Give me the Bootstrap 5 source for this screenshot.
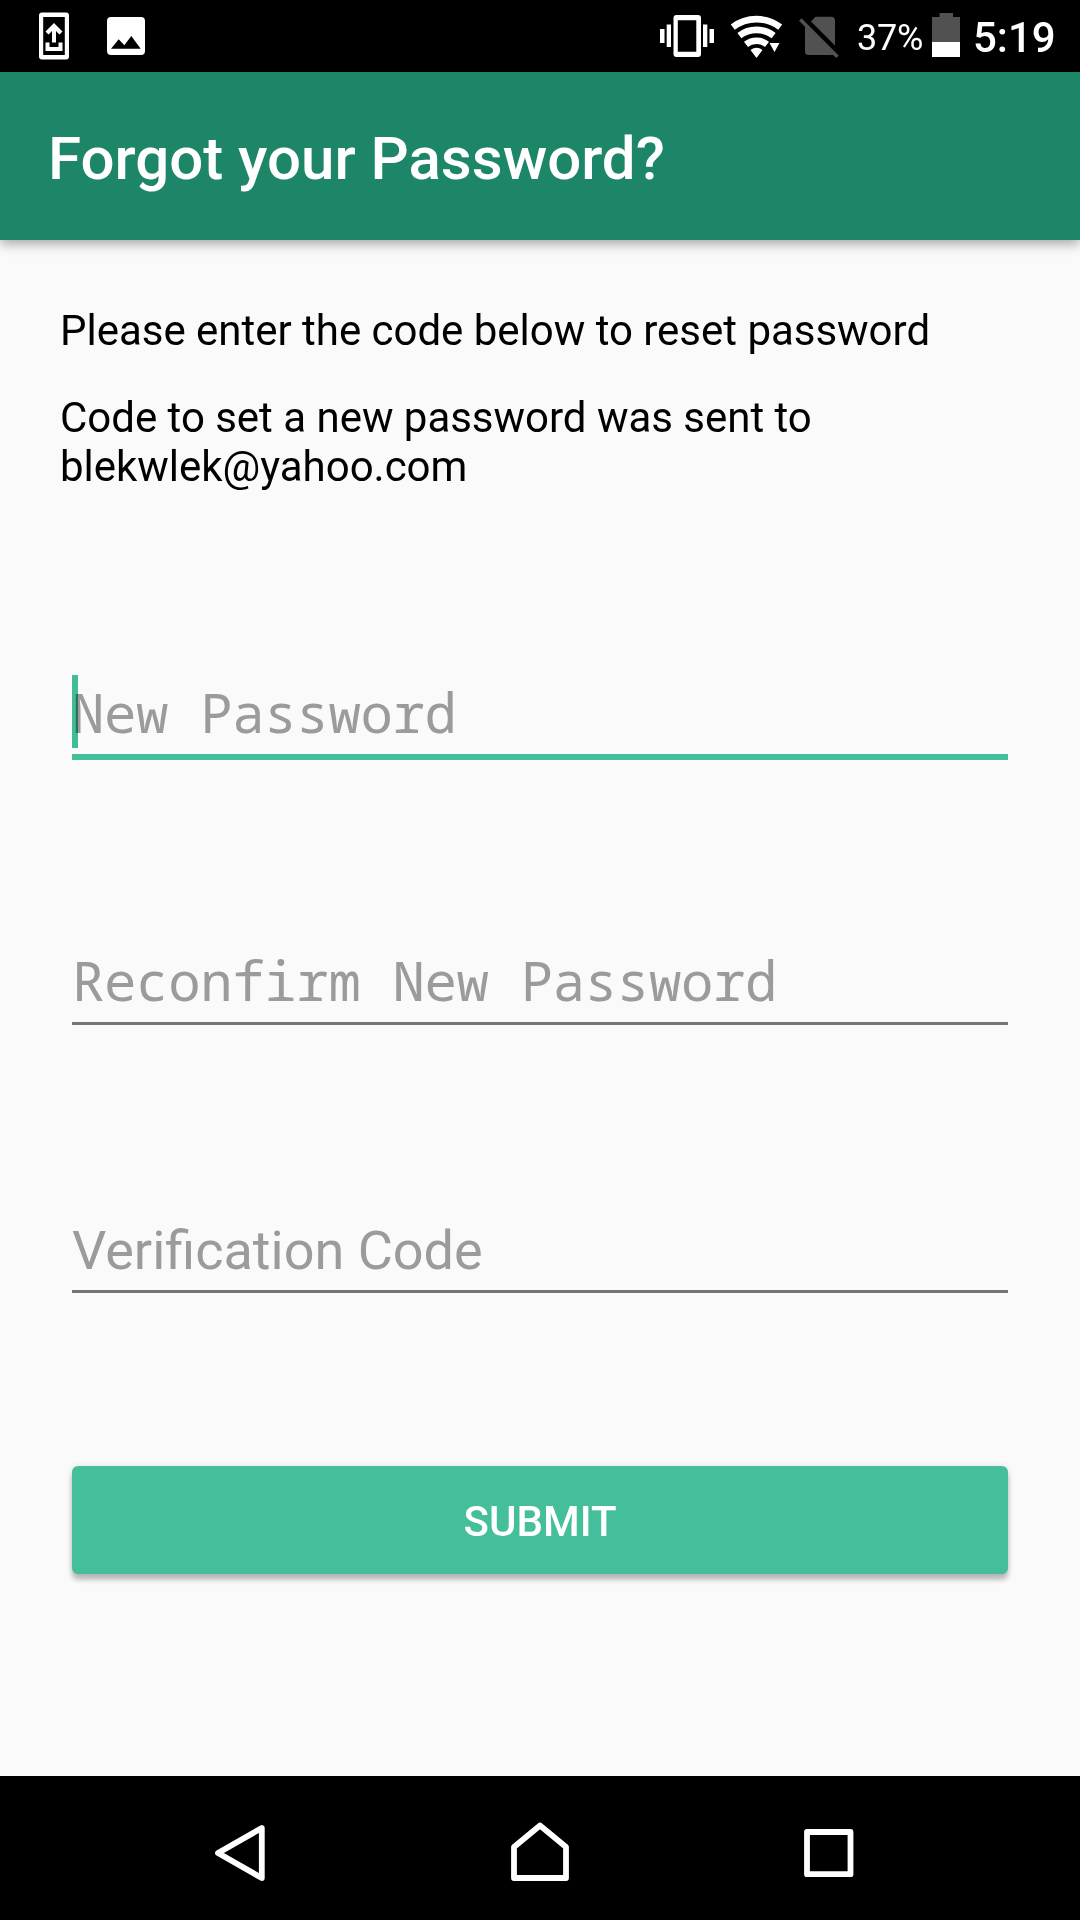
<!DOCTYPE html>
<html lang="en">
<head>
<meta charset="utf-8">
<meta name="viewport" content="width=device-width, initial-scale=1">
<title>Forgot your Password?</title>
<link rel="stylesheet" href="https://cdn.jsdelivr.net/npm/bootstrap@5.3.0/dist/css/bootstrap.min.css">
<style>
body { font-family: Roboto, sans-serif; background: #fafafa; color: #000; }
svg { display: block; flex: none; }
.screen { height: 1920px; width: 1080px; }
.status-bar { height: 72px; padding-left: 39px; padding-right: 26px; }
.icon-picture { margin-left: 38px; }
.icon-signal { margin-left: 16px; }
.battery-text { font-size: 36px; line-height: 72px; padding-top: 3px; margin-left: 17px; width: 75px; letter-spacing: -.2px; }
.clock { font-size: 42px; line-height: 72px; font-weight: 500; margin-left: 13px; padding-top: 3px; width: 81px; }
.app-bar { height: 168px; background: #1e8668; box-shadow: 0 3px 12px rgba(0,0,0,.38); padding: 0 48px; z-index: 1; }
.app-title { font-size: 60px; line-height: 70px; font-weight: 500; padding-top: 5px; }
.content-area { padding: 66px 60px 0; }
.info { font-size: 42px; line-height: 49px; letter-spacing: -.02px; }
.info + .info { margin-top: 38px; }
.entry-form { padding: 0 12px; margin-top: 180px; }
.field { height: 92px; }
.field .form-control { height: 86px; padding: 4px 0 0; background: transparent; border: 0; border-bottom: 3px solid #757575; border-radius: 0; font-size: 54px; line-height: 63px; letter-spacing: -.03px; font-variant-ligatures: common-ligatures; box-shadow: none; color: #000; }
.field .form-control::placeholder { color: #9b9b9b; opacity: 1; }
.field .form-control.mono { font-family: "Noto Sans Mono", "DejaVu Sans Mono", monospace; letter-spacing: -.35px; padding: 0 0 2px; }
.field .form-control.plain { letter-spacing: normal; }
.field.active .form-control { height: 89px; border-bottom: 6px solid #44be9b; }
.cursor { width: 6px; height: 73px; top: 4px; left: 0; background: #44be9b; mix-blend-mode: multiply; }
.gap-field { margin-top: 176px; }
.submit { height: 108px; margin-top: 167px; padding: 2px 0 0; background: #44be9b; color: #fff; border: 0; border-radius: 6px; font-size: 42px; font-weight: 500; line-height: 49px; box-shadow: 0 6px 5px rgba(0,0,0,.24), 0 0 6px rgba(0,0,0,.1); }
.nav-bar { height: 144px; padding: 10px 226px 0 214px; }
.icon-home { margin-left: 9px; }
</style>
<script src="https://cdn.jsdelivr.net/npm/bootstrap@5.3.0/dist/js/bootstrap.bundle.min.js"></script>
</head>
<body>
<div class="screen d-flex flex-column overflow-hidden">
  <div class="status-bar bg-black text-white d-flex align-items-center flex-shrink-0">
    <!-- system update -->
    <svg width="30" height="72" viewBox="39 0 30 72"><path fill="#fff" fill-rule="evenodd" d="M42 12.500h24q3 0 3 3v41q0 3-3 3H42q-3 0-3-3v-41q0-3 3-3zM43.200 17v38h21.600V17z"/><path fill="#fff" d="M54 23l8.500 8.500-3 3L56 31v11.500h-4V31l-3.500 3.500-3-3zM45.500 42.500h4V47h9v-4.500h4V51h-17z"/></svg>
    <!-- picture -->
    <svg class="icon-picture" width="38" height="72" viewBox="107 0 38 72"><path fill="#fff" fill-rule="evenodd" d="M111 17h30q4 0 4 4v30q0 4-4 4h-30q-4 0-4-4V21q0-4 4-4zM111 48.700h29.700L131.300 36l-7 9.200-5.600-6z"/></svg>
    <!-- vibrate -->
    <svg class="ms-auto" width="54" height="72" viewBox="660 0 54 72"><g fill="#fff"><path d="M660 29h4.500v14H660zM666.700 24.500h4.300V47h-4.300zM703 24.500h4.300V47H703zM709.500 29h4.500v14h-4.500z"/><path fill-rule="evenodd" d="M676.500 15h21.500q3 0 3 3v36q0 3-3 3h-21.500q-3 0-3-3V18q0-3 3-3zM677.800 20.300v31.500h18.500V20.300z"/></g></svg>
    <!-- wifi -->
    <svg class="icon-signal" width="53" height="72" viewBox="730 0 53 72"><g fill="none" stroke="#fff" stroke-width="6.600"><path d="M732.800 27.200a39 39 0 0 1 47.400 0M739.400 35.600a28.300 28.300 0 0 1 34.200 0M746 44.300a17.300 17.300 0 0 1 21 0"/></g><path fill="#fff" d="M756.500 58l-6-8a10 10 0 0 1 12 0zM769.500 43h10l-5 9z"/></svg>
    <!-- no SIM -->
    <svg class="icon-signal" width="41" height="72" viewBox="799 0 41 72"><g fill="#515151"><path d="M811 21.500l4.500-4.700h15.500q4 0 4 4v24.700zM805 25.500v26q0 3.500 3.500 3.500h23.500q1.500 0 2.200-.8z"/><path d="M801.500 18.300l37.200 37.200-2.500 2.500L799 20.800z"/></g></svg>
    <span class="battery-text">37%</span>
    <svg width="28" height="72" viewBox="932 0 28 72"><path fill="#515151" d="M939.500 13h13.500v4h7v25h-28V17h7.500z"/><path fill="#fff" d="M932 42h28v15h-28z"/></svg>
    <span class="clock">5:19</span>
  </div>
  <header class="app-bar position-relative d-flex align-items-center flex-shrink-0">
    <h1 class="app-title text-white mb-0">Forgot your Password?</h1>
  </header>
  <main class="content-area flex-grow-1">
    <p class="info mb-0">Please enter the code below to reset password</p>
    <p class="info mb-0">Code to set a new password was sent to<br>blekwlek@yahoo.com</p>
    <form class="entry-form">
      <div class="field active position-relative"><input class="form-control mono" type="text" placeholder="New Password"><span class="cursor position-absolute"></span></div>
      <div class="field gap-field"><input class="form-control mono" type="text" placeholder="Reconfirm New Password"></div>
      <div class="field gap-field"><input class="form-control plain" type="text" placeholder="Verification Code"></div>
      <button class="submit btn w-100" type="button">SUBMIT</button>
    </form>
  </main>
  <nav class="nav-bar bg-black d-flex align-items-center justify-content-between flex-shrink-0">
    <svg width="52" height="60" viewBox="214 1823 52 60" fill="none" stroke="#fff" stroke-width="5.800" stroke-linejoin="round"><path d="M261.800 1828v50L218 1853z"/></svg>
    <svg class="icon-home" width="60" height="62" viewBox="510 1822 60 62" fill="none" stroke="#fff" stroke-width="5.800" stroke-linejoin="round"><path d="M514 1878v-31l26-21.500 26 21.500v31z"/></svg>
    <svg width="50" height="50" viewBox="804 1828 50 50" fill="none" stroke="#fff" stroke-width="5.800" stroke-linejoin="round"><path d="M807 1832h43.500v42.200H807z"/></svg>
  </nav>
</div>
</body>
</html>
